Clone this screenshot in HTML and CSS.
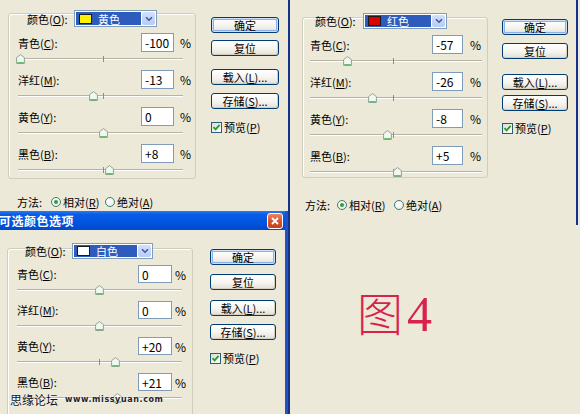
FILE: index.html
```html
<!DOCTYPE html>
<html lang="zh-CN">
<head>
<meta charset="utf-8">
<title>可选颜色选项</title>
<link rel="stylesheet" href="styles.css">
</head>
<body>
<div class="screen">
  <div class="col-left">
    <section class="pane pane-tl">
      <div class="pane-main">
        <div class="group g-tl">
          <div class="ghead">
            <span class="glabel">颜色(<u>O</u>):</span>
            <div class="dd"><div class="dd-main"><span class="sw sw-yellow"></span><span class="dd-text">黄色</span></div><span class="dd-btn"><svg width="8" height="6" viewBox="0 0 8 6"><path d="M1 1.2 L4 4.2 L7 1.2" fill="none" stroke="#3E5A94" stroke-width="1.6"/></svg></span></div>
          </div>
          <div class="rows">
            <div class="blk"><div class="row"><span class="lbl">青色(<u>C</u>):</span><span class="inp">-100</span><span class="pct">%</span></div><div class="slider"><i class="track"></i><i class="tick"></i><svg class="thumb" style="left:-2px" width="9" height="10" viewBox="0 0 9 10"><path d="M4.5 0.6 L8.4 3.6 V9.4 H0.6 V3.6 Z" fill="#F3F8EF" stroke="#8AA596"/><path d="M1.2 8.8 H7.8" stroke="#4DB05A" stroke-width="1.2"/></svg></div></div>
            <div class="blk"><div class="row"><span class="lbl">洋红(<u>M</u>):</span><span class="inp">-13</span><span class="pct">%</span></div><div class="slider"><i class="track"></i><i class="tick"></i><svg class="thumb" style="left:71px" width="9" height="10" viewBox="0 0 9 10"><path d="M4.5 0.6 L8.4 3.6 V9.4 H0.6 V3.6 Z" fill="#F3F8EF" stroke="#8AA596"/><path d="M1.2 8.8 H7.8" stroke="#4DB05A" stroke-width="1.2"/></svg></div></div>
            <div class="blk"><div class="row"><span class="lbl">黄色(<u>Y</u>):</span><span class="inp">0</span><span class="pct">%</span></div><div class="slider"><i class="track"></i><i class="tick"></i><svg class="thumb" style="left:81px" width="9" height="10" viewBox="0 0 9 10"><path d="M4.5 0.6 L8.4 3.6 V9.4 H0.6 V3.6 Z" fill="#F3F8EF" stroke="#8AA596"/><path d="M1.2 8.8 H7.8" stroke="#4DB05A" stroke-width="1.2"/></svg></div></div>
            <div class="blk"><div class="row"><span class="lbl">黑色(<u>B</u>):</span><span class="inp">+8</span><span class="pct">%</span></div><div class="slider"><i class="track"></i><i class="tick"></i><svg class="thumb" style="left:87px" width="9" height="10" viewBox="0 0 9 10"><path d="M4.5 0.6 L8.4 3.6 V9.4 H0.6 V3.6 Z" fill="#F3F8EF" stroke="#8AA596"/><path d="M1.2 8.8 H7.8" stroke="#4DB05A" stroke-width="1.2"/></svg></div></div>
          </div>
        </div>
        <div class="method m-tl">
          <span class="m-label">方法:</span>
          <span class="opt"><i class="radio on"></i>相对(<u>R</u>)</span>
          <span class="opt"><i class="radio"></i>绝对(<u>A</u>)</span>
        </div>
      </div>
      <div class="btns b-tl">
        <span class="btn default">确定</span>
        <span class="btn">复位</span>
        <span class="btn">载入(<u>L</u>)...</span>
        <span class="btn">存储(<u>S</u>)...</span>
        <span class="check"><i class="cb"><svg width="9" height="9" viewBox="0 0 9 9"><path d="M1.5 4.2 L3.6 6.4 L7.6 1.8" fill="none" stroke="#21A121" stroke-width="1.8"/></svg></i>预览(<u>P</u>)</span>
      </div>
    </section>

    <section class="dialog">
      <div class="titlebar">
        <span class="title-text">可选颜色选项</span>
        <span class="close"><svg width="10" height="10" viewBox="0 0 10 10"><path d="M2 2 L8 8 M8 2 L2 8" stroke="#fff" stroke-width="1.8"/></svg></span>
      </div>
      <div class="pane dialog-body">
        <div class="pane-main">
          <div class="group g-bl">
            <div class="ghead">
              <span class="glabel">颜色(<u>O</u>):</span>
              <div class="dd"><div class="dd-main"><span class="sw sw-white"></span><span class="dd-text">白色</span></div><span class="dd-btn"><svg width="8" height="6" viewBox="0 0 8 6"><path d="M1 1.2 L4 4.2 L7 1.2" fill="none" stroke="#3E5A94" stroke-width="1.6"/></svg></span></div>
            </div>
            <div class="rows">
              <div class="blk"><div class="row"><span class="lbl">青色(<u>C</u>):</span><span class="inp">0</span><span class="pct">%</span></div><div class="slider"><i class="track"></i><i class="tick"></i><svg class="thumb" style="left:78px" width="9" height="10" viewBox="0 0 9 10"><path d="M4.5 0.6 L8.4 3.6 V9.4 H0.6 V3.6 Z" fill="#F3F8EF" stroke="#8AA596"/><path d="M1.2 8.8 H7.8" stroke="#4DB05A" stroke-width="1.2"/></svg></div></div>
              <div class="blk"><div class="row"><span class="lbl">洋红(<u>M</u>):</span><span class="inp">0</span><span class="pct">%</span></div><div class="slider"><i class="track"></i><i class="tick"></i><svg class="thumb" style="left:78px" width="9" height="10" viewBox="0 0 9 10"><path d="M4.5 0.6 L8.4 3.6 V9.4 H0.6 V3.6 Z" fill="#F3F8EF" stroke="#8AA596"/><path d="M1.2 8.8 H7.8" stroke="#4DB05A" stroke-width="1.2"/></svg></div></div>
              <div class="blk"><div class="row"><span class="lbl">黄色(<u>Y</u>):</span><span class="inp">+20</span><span class="pct">%</span></div><div class="slider"><i class="track"></i><i class="tick"></i><svg class="thumb" style="left:94px" width="9" height="10" viewBox="0 0 9 10"><path d="M4.5 0.6 L8.4 3.6 V9.4 H0.6 V3.6 Z" fill="#F3F8EF" stroke="#8AA596"/><path d="M1.2 8.8 H7.8" stroke="#4DB05A" stroke-width="1.2"/></svg></div></div>
              <div class="blk"><div class="row"><span class="lbl">黑色(<u>B</u>):</span><span class="inp">+21</span><span class="pct">%</span></div><div class="slider"><i class="track"></i><i class="tick"></i><svg class="thumb" style="left:96px" width="9" height="10" viewBox="0 0 9 10"><path d="M4.5 0.6 L8.4 3.6 V9.4 H0.6 V3.6 Z" fill="#F3F8EF" stroke="#8AA596"/><path d="M1.2 8.8 H7.8" stroke="#4DB05A" stroke-width="1.2"/></svg></div></div>
            </div>
          </div>
        </div>
        <div class="btns b-bl">
          <span class="btn default">确定</span>
          <span class="btn">复位</span>
          <span class="btn">载入(<u>L</u>)...</span>
          <span class="btn">存储(<u>S</u>)...</span>
          <span class="check"><i class="cb"><svg width="9" height="9" viewBox="0 0 9 9"><path d="M1.5 4.2 L3.6 6.4 L7.6 1.8" fill="none" stroke="#21A121" stroke-width="1.8"/></svg></i>预览(<u>P</u>)</span>
        </div>
      </div>
      <div class="watermark"><span class="wm-cn">思缘论坛</span><span class="wm-url">www.missyuan.com</span></div>
    </section>
  </div>

  <div class="col-right">
    <section class="pane pane-tr">
      <div class="pane-main">
        <div class="group g-tr">
          <div class="ghead">
            <span class="glabel">颜色(<u>O</u>):</span>
            <div class="dd"><div class="dd-main"><span class="sw sw-red"></span><span class="dd-text">红色</span></div><span class="dd-btn"><svg width="8" height="6" viewBox="0 0 8 6"><path d="M1 1.2 L4 4.2 L7 1.2" fill="none" stroke="#3E5A94" stroke-width="1.6"/></svg></span></div>
          </div>
          <div class="rows">
            <div class="blk"><div class="row"><span class="lbl">青色(<u>C</u>):</span><span class="inp">-57</span><span class="pct">%</span></div><div class="slider"><i class="track"></i><i class="tick"></i><svg class="thumb" style="left:33px" width="9" height="10" viewBox="0 0 9 10"><path d="M4.5 0.6 L8.4 3.6 V9.4 H0.6 V3.6 Z" fill="#F3F8EF" stroke="#8AA596"/><path d="M1.2 8.8 H7.8" stroke="#4DB05A" stroke-width="1.2"/></svg></div></div>
            <div class="blk"><div class="row"><span class="lbl">洋红(<u>M</u>):</span><span class="inp">-26</span><span class="pct">%</span></div><div class="slider"><i class="track"></i><i class="tick"></i><svg class="thumb" style="left:58px" width="9" height="10" viewBox="0 0 9 10"><path d="M4.5 0.6 L8.4 3.6 V9.4 H0.6 V3.6 Z" fill="#F3F8EF" stroke="#8AA596"/><path d="M1.2 8.8 H7.8" stroke="#4DB05A" stroke-width="1.2"/></svg></div></div>
            <div class="blk"><div class="row"><span class="lbl">黄色(<u>Y</u>):</span><span class="inp">-8</span><span class="pct">%</span></div><div class="slider"><i class="track"></i><i class="tick"></i><svg class="thumb" style="left:73px" width="9" height="10" viewBox="0 0 9 10"><path d="M4.5 0.6 L8.4 3.6 V9.4 H0.6 V3.6 Z" fill="#F3F8EF" stroke="#8AA596"/><path d="M1.2 8.8 H7.8" stroke="#4DB05A" stroke-width="1.2"/></svg></div></div>
            <div class="blk"><div class="row"><span class="lbl">黑色(<u>B</u>):</span><span class="inp">+5</span><span class="pct">%</span></div><div class="slider"><i class="track"></i><i class="tick"></i><svg class="thumb" style="left:83px" width="9" height="10" viewBox="0 0 9 10"><path d="M4.5 0.6 L8.4 3.6 V9.4 H0.6 V3.6 Z" fill="#F3F8EF" stroke="#8AA596"/><path d="M1.2 8.8 H7.8" stroke="#4DB05A" stroke-width="1.2"/></svg></div></div>
          </div>
        </div>
        <div class="method m-tr">
          <span class="m-label">方法:</span>
          <span class="opt"><i class="radio on"></i>相对(<u>R</u>)</span>
          <span class="opt"><i class="radio"></i>绝对(<u>A</u>)</span>
        </div>
      </div>
      <div class="btns b-tr">
        <span class="btn default">确定</span>
        <span class="btn">复位</span>
        <span class="btn">载入(<u>L</u>)...</span>
        <span class="btn">存储(<u>S</u>)...</span>
        <span class="check"><i class="cb"><svg width="9" height="9" viewBox="0 0 9 9"><path d="M1.5 4.2 L3.6 6.4 L7.6 1.8" fill="none" stroke="#21A121" stroke-width="1.8"/></svg></i>预览(<u>P</u>)</span>
      </div>
    </section>
    <div class="figure"><span class="fig-cn">图</span><span class="fig-num">4</span></div>
  </div>
</div>
</body>
</html>
```

FILE: styles.css
```css
* { box-sizing: border-box; }

body {
  margin: 0;
  background: #ECE9D8;
  font-family: "Noto Sans CJK SC", "Noto Sans", sans-serif;
  font-size: 11px;
  color: #000;
}

u { text-decoration: underline; text-underline-offset: 1px; }

.screen {
  display: flex;
  width: 580px;
  height: 414px;
  overflow: hidden;
}

.col-left {
  flex: none;
  width: 288px;
  max-width: 288px;
  height: 414px;
  display: flex;
  flex-direction: column;
  overflow: hidden;
  contain: paint;
}
.col-right {
  flex: none;
  width: 292px;
  height: 414px;
  display: flex;
  flex-direction: column;
  border-left: 2px solid #14318C;
}

.pane { display: flex; align-items: flex-start; }
.pane-tl { width: 288px; height: 211px; flex: none; }
.pane-tr { height: 225px; width: 288px; flex: none; border-right: 2px solid #14318C; }

/* group boxes */
.group {
  border: 1px solid #CFCDBE;
  border-radius: 3px;
  box-shadow: inset 1px 1px 0 #fff;
}
.ghead { display: flex; align-items: center; }
.glabel { flex: none; white-space: nowrap; }
.dd {
  display: flex;
  border: 1px solid #7F9DB9;
  background: #fff;
  padding: 1px;
  height: 100%;
}
.dd-main {
  flex: 1;
  display: flex;
  align-items: center;
  background: #2E5CBC;
  color: #fff;
  padding-left: 3px;
}
.sw { width: 13px; height: 10px; border: 1px solid #1A1A1A; margin-right: 6px; flex: none; }
.sw-yellow { background: #FFF200; }
.sw-red { background: #D80000; }
.sw-white { background: #FFFFFF; }
.dd-btn {
  width: 13px;
  flex: none;
  display: flex;
  align-items: center;
  justify-content: center;
  background: linear-gradient(180deg, #D3E0FD 0%, #B7CBF5 100%);
  border-radius: 2px;
  margin-left: 1px;
}

.blk { position: relative; }
.row { display: flex; align-items: center; }
.lbl { flex: none; white-space: nowrap; }
.inp {
  flex: none;
  background: #fff;
  border: 1px solid #7F9DB9;
  padding-left: 3px;
  font-size: 12px;
  display: flex;
  align-items: center;
}
.pct { font-size: 12px; }

.slider { position: relative; height: 12px; margin-top: 1px; }
.track {
  position: absolute;
  left: 0; right: 0; top: 5px;
  height: 2px;
  border-top: 1px solid #B5B3A5;
  border-bottom: 1px solid #FFFFFF;
}
.tick {
  position: absolute;
  top: 3px;
  width: 1px;
  height: 6px;
  background: #8E8C80;
}
.thumb { position: absolute; top: 1px; }

/* top-left */
.pane-tl .pane-main { margin: 13px 0 0 8px; }
.g-tl { width: 188px; height: 166px; }
.g-tl .ghead { height: 17px; margin-top: -4px; padding-left: 18px; }
.g-tl .glabel { width: 47px; }
.g-tl .dd { width: 83px; }
.g-tl .rows { margin-top: 6px; padding-left: 9px; }
.g-tl .blk { height: 37px; }
.g-tl .row { height: 19px; }
.g-tl .lbl { width: 123px; }
.g-tl .inp { width: 33px; height: 19px; }
.g-tl .pct { margin-left: 6px; }
.g-tl .slider { width: 165px; }
.g-tl .tick { left: 85px; }

/* top-right */
.pane-tr .pane-main { margin: 17px 0 0 12px; }
.g-tr { width: 186px; height: 161px; }
.g-tr .ghead { height: 16px; margin-top: -5px; padding-left: 12px; }
.g-tr .glabel { width: 48px; }
.g-tr .dd { width: 84px; }
.g-tr .rows { margin-top: 6px; padding-left: 7px; }
.g-tr .blk { height: 37px; }
.g-tr .row { height: 19px; }
.g-tr .lbl { width: 122px; }
.g-tr .inp { width: 31px; height: 19px; }
.g-tr .pct { margin-left: 7px; }
.g-tr .slider { width: 172px; }
.g-tr .tick { left: 83px; }

/* bottom dialog */
.dialog {
  width: 288px;
  height: 203px;
  flex: none;
  position: relative;
  overflow: hidden;
  border-right: 3px solid #2452C4;
}
.titlebar {
  height: 19px;
  display: flex;
  align-items: center;
  justify-content: space-between;
  background: linear-gradient(180deg, #2A7AF0 0%, #0A5CE6 18%, #0055E0 60%, #0049CC 100%);
  color: #fff;
  font-size: 12px;
  font-weight: bold;
  padding-right: 2px;
}
.title-text { margin-left: -1px; letter-spacing: 0.5px; }
.close {
  width: 16px;
  height: 16px;
  border: 1px solid #fff;
  border-radius: 3px;
  background: linear-gradient(180deg, #EC8562 0%, #D8532D 50%, #C4401D 100%);
  display: flex;
  align-items: center;
  justify-content: center;
}
.dialog-body .pane-main { margin: 18px 0 0 7px; }
.g-bl { width: 186px; height: 180px; }
.g-bl .ghead { height: 16px; margin-top: -6px; padding-left: 17px; }
.g-bl .glabel { width: 47px; }
.g-bl .dd { width: 81px; }
.g-bl .rows { margin-top: 6px; padding-left: 9px; }
.g-bl .blk { height: 36px; }
.g-bl .row { height: 18px; }
.g-bl .lbl { width: 121px; }
.g-bl .inp { width: 34px; height: 18px; }
.g-bl .pct { margin-left: 3px; }
.g-bl .slider { width: 165px; }
.g-bl .tick { left: 82px; }

/* method radios */
.method { display: flex; align-items: center; height: 14px; }
.opt { display: flex; align-items: center; white-space: nowrap; }
.radio {
  width: 10px;
  height: 10px;
  border-radius: 50%;
  border: 1px solid #3F7F72;
  background: radial-gradient(circle at 40% 40%, #FFFFFF 0%, #E6E6DE 100%);
  margin-right: 2px;
  display: flex;
  align-items: center;
  justify-content: center;
  flex: none;
}
.radio.on::after {
  content: "";
  width: 4px;
  height: 4px;
  border-radius: 50%;
  background: #2EA03A;
}
.m-tl { margin-top: 16px; padding-left: 9px; }
.m-tl .m-label { width: 34px; }
.m-tl .opt { width: 54px; }
.m-tr { margin-top: 20px; padding-left: 3px; }
.m-tr .m-label { width: 32px; }
.m-tr .opt { width: 57px; }

/* buttons */
.btns { display: flex; flex-direction: column; align-items: flex-start; }
.btn {
  display: block;
  height: 16px;
  border: 1px solid #003C74;
  border-radius: 3px;
  background: linear-gradient(180deg, #FFFFFF 0%, #F5F4EF 55%, #E2DFD4 100%);
  box-shadow: inset -1px -1px 0 #D4CFC2;
  text-align: center;
  line-height: 14px;
  white-space: nowrap;
}
.btn.default { box-shadow: inset 0 0 0 1px #CDE0FA, inset 0 0 0 2px #8EAEE6; }
.check { display: flex; align-items: center; height: 12px; white-space: nowrap; }
.cb {
  width: 11px;
  height: 11px;
  border: 1px solid #2A5C7A;
  background: linear-gradient(135deg, #DCDCD5 0%, #FFFFFF 100%);
  display: flex;
  align-items: center;
  justify-content: center;
  margin-right: 2px;
  flex: none;
}

.b-tl { margin: 17px 0 0 15px; }
.b-tl .btn { width: 68px; }
.b-tl .btn:nth-child(2) { margin-top: 7px; }
.b-tl .btn:nth-child(3) { margin-top: 13px; }
.b-tl .btn:nth-child(4) { margin-top: 8px; }
.b-tl .check { margin-top: 12px; }

.b-tr { margin: 19px 0 0 14px; }
.b-tr .btn { width: 66px; }
.b-tr .btn:nth-child(2) { margin-top: 8px; }
.b-tr .btn:nth-child(3) { margin-top: 15px; }
.b-tr .btn:nth-child(4) { margin-top: 5px; }
.b-tr .check { margin-top: 11px; }

.b-bl { margin: 19px 0 0 17px; }
.b-bl .btn { width: 66px; }
.b-bl .btn:nth-child(2) { margin-top: 9px; }
.b-bl .btn:nth-child(3) { margin-top: 10px; }
.b-bl .btn:nth-child(4) { margin-top: 8px; }
.b-bl .check { margin-top: 12px; }

/* watermark overlay */
.watermark {
  position: absolute;
  left: 10px;
  top: 180px;
  display: flex;
  align-items: center;
  gap: 7px;
  text-shadow: 0 0 2px #fff, 0 0 1px #fff;
}
.wm-cn { font-size: 12px; color: #111; }
.wm-url { font-family: "DejaVu Sans", sans-serif; font-size: 8px; font-weight: bold; color: #222; letter-spacing: 0.6px; }

/* figure label */
.figure {
  padding: 63px 0 0 67px;
  color: #D8224E;
  display: flex;
  align-items: baseline;
}
.fig-cn { font-family: "Noto Sans CJK SC", sans-serif; font-weight: 300; font-size: 46px; line-height: 1; }
.fig-num { font-family: "Liberation Serif", serif; font-size: 50px; line-height: 1; margin-left: 4px; }
```
